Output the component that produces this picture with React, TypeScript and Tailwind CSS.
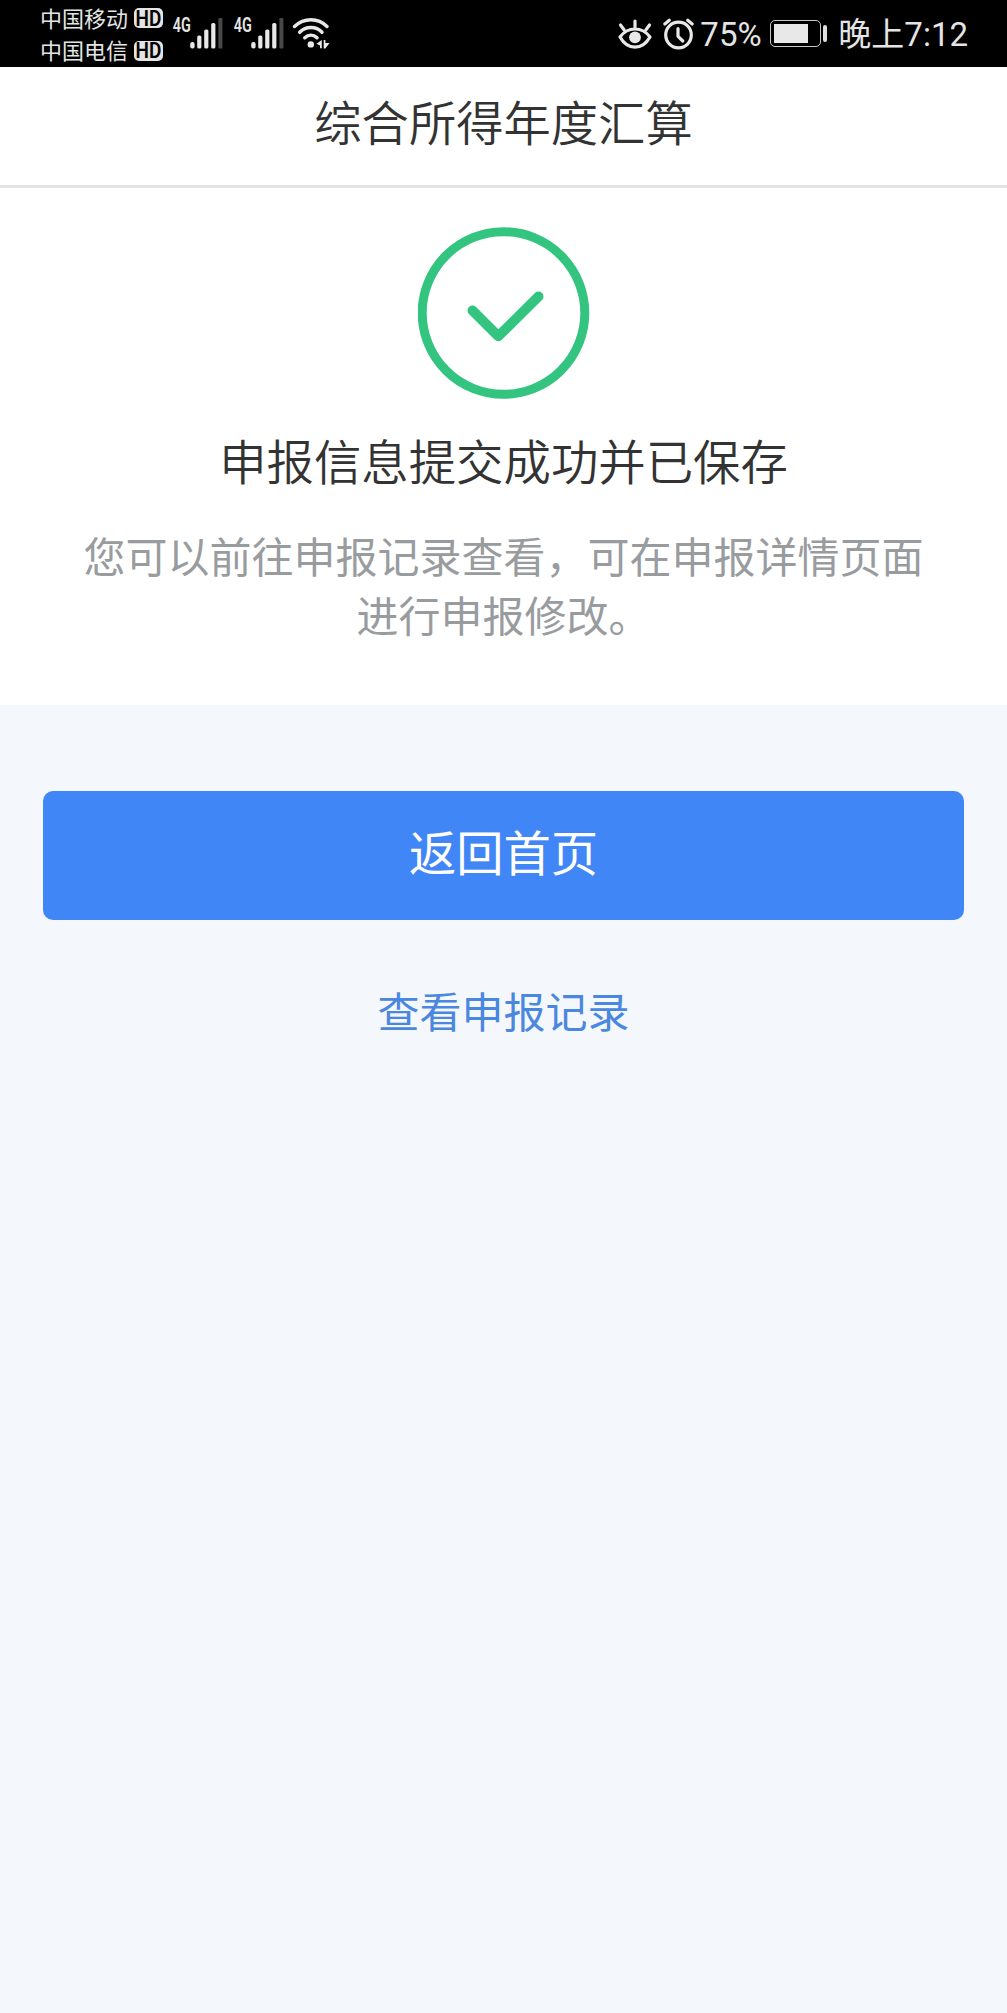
function Carrier({ name }: { name: string }) {
  return (
    <div className="flex h-[32.5px] items-center gap-[6px]">
      <span className="-mt-[3px] w-[88px] whitespace-nowrap text-[22px] leading-[30px]">{name}</span>
      <span className="flex h-[20px] w-[29px] items-center justify-center rounded-[5px] bg-[#e4e4e4] text-black">
        <span className="scale-y-[1.15] font-['Roboto',sans-serif] text-[19px] font-semibold leading-none">HD</span>
      </span>
    </div>
  );
}

function Signal() {
  return (
    <div className="flex w-[52px] shrink-0">
      <span className="mt-[16px] w-[17px] origin-left scale-x-[0.72] pl-px font-['Roboto',sans-serif] text-[20px] font-semibold leading-[18px]">
        4G
      </span>
      <svg className="mt-[17px]" width="34" height="33" viewBox="0 0 34 33" fill="#e8e8e8">
        <rect x="1.2" y="25" width="4.4" height="6.6" rx="2" />
        <rect x="8.2" y="18.5" width="4.2" height="13.1" rx="1.6" />
        <rect x="15.2" y="12.5" width="4.2" height="19.1" rx="1.6" />
        <rect x="22.2" y="6" width="4.2" height="25.6" rx="1.6" />
        <rect x="29.4" y="1" width="4" height="30.6" rx="1.2" fill="#484848" />
      </svg>
    </div>
  );
}

function Wifi() {
  return (
    <svg width="38" height="34" viewBox="292 16 38 34" fill="none" stroke="#e8e8e8" strokeWidth="3.5" strokeLinecap="round">
      <path d="M294.5 26.5C304 17.5 318 17.5 327 26.5" />
      <path d="M299.7 32.3C306 26 316 26 322 32.3" />
      <path d="M304.8 37.7C308.5 34.3 313.5 34.3 317 37.7" />
      <circle cx="310.8" cy="44.4" r="3.2" fill="#e8e8e8" stroke="none" />
      <path d="M316.5 43.8L321.8 40V48.3H320V45.5Z" fill="#e8e8e8" stroke="none" />
      <path d="M323.7 40H325.4V43H329.5L325.4 48.5H323.7Z" fill="#e8e8e8" stroke="none" />
    </svg>
  );
}

function Eye() {
  return (
    <svg width="36" height="32" viewBox="617 18 36 32" fill="none" stroke="#e8e8e8" strokeWidth="3.2" strokeLinecap="round">
      <path d="M620 37C624 31.5 629 29 635 29S646 31.5 650 37C646 44 641 47.2 635 47.2S624 44 620 37Z" strokeLinejoin="round" />
      <circle cx="635" cy="37.3" r="5.9" fill="#e8e8e8" stroke="none" />
      <path d="M635 21V27M620.5 25L624.2 30M649.5 25L645.8 30" />
    </svg>
  );
}

function Alarm() {
  return (
    <svg width="34" height="32" viewBox="662 18 34 32" fill="none" stroke="#e8e8e8" strokeWidth="3.2" strokeLinecap="round" strokeLinejoin="round">
      <circle cx="678.5" cy="35" r="12.8" />
      <path d="M678 28.5V36.3L682.8 41" />
      <path d="M664.8 24L669.3 20.3M687.7 20.3L692.2 24" />
    </svg>
  );
}

function Battery() {
  return (
    <div className="flex items-center gap-[2px]">
      <div className="h-[27px] w-[51px] rounded-[5px] border border-[#c8c8c8] p-[3px]">
        <div className="h-[19px] w-[34px] bg-[#e8e8e8]" />
      </div>
      <div className="h-[17px] w-[4px] rounded-[2px] bg-[#e0e0e0]" />
    </div>
  );
}

export default function App() {
  return (
    <div className="flex min-h-[2013px] w-[1007px] flex-col bg-[#f4f7fb] font-['Noto_Sans_CJK_SC',sans-serif]">
      <header className="flex h-[67px] items-start justify-between bg-black pl-[40px] pr-[39px] text-[#e4e4e4]">
        <div className="flex">
          <div className="mr-[9px] flex flex-col pt-[2px]">
            <Carrier name="中国移动" />
            <Carrier name="中国电信" />
          </div>
          <Signal />
          <div className="w-[9px]" />
          <Signal />
          <div className="ml-[7px] mt-[16px]">
            <Wifi />
          </div>
        </div>
        <div className="flex h-[67px] items-center">
          <Eye />
          <div className="ml-[9px]">
            <Alarm />
          </div>
          <span className="ml-[4px] mt-[3px] w-[62px] font-['Roboto',sans-serif] text-[33px] leading-[40px]">75%</span>
          <div className="ml-[8px] mr-[11px]">
            <Battery />
          </div>
          <span className="mt-[3px] whitespace-nowrap font-['Roboto','Noto_Sans_CJK_SC',sans-serif] text-[33px] leading-[40px]">
            晚上7:12
          </span>
        </div>
      </header>

      <div className="flex h-[121px] items-center justify-center border-b-[3px] border-[#e4e4e4] bg-white pb-[10px]">
        <h1 className="text-[47.3px] font-[350] leading-[60px] text-[#333333]">综合所得年度汇算</h1>
      </div>

      <main className="flex h-[517px] flex-col items-center bg-white pt-[39px]">
        <svg width="172" height="172" viewBox="0 0 172 172" fill="none" stroke="#33c480" strokeWidth="9">
          <circle cx="85.5" cy="86" r="81.3" />
          <path d="M54.5 83.5L80.3 109.3L120.5 69.5" strokeWidth="10" strokeLinecap="round" strokeLinejoin="round" />
        </svg>
        <h2 className="mt-[31px] text-[47.4px] font-[350] leading-[60px] text-[#333333]">申报信息提交成功并已保存</h2>
        <p className="mt-[35px] text-center text-[42px] leading-[59px] text-[#999c9f]">
          您可以前往申报记录查看，可在申报详情页面
          <br />
          进行申报修改。
        </p>
      </main>

      <div className="flex flex-col items-center px-[43px] pt-[86px]">
        <button className="flex h-[129px] w-full items-center justify-center rounded-[10px] bg-[#4086f6] pb-[9px] text-[47.3px] leading-[60px] text-white">
          返回首页
        </button>
        <a className="mt-[60px] text-[42px] leading-[60px] text-[#4a87df]">查看申报记录</a>
      </div>
    </div>
  );
}
